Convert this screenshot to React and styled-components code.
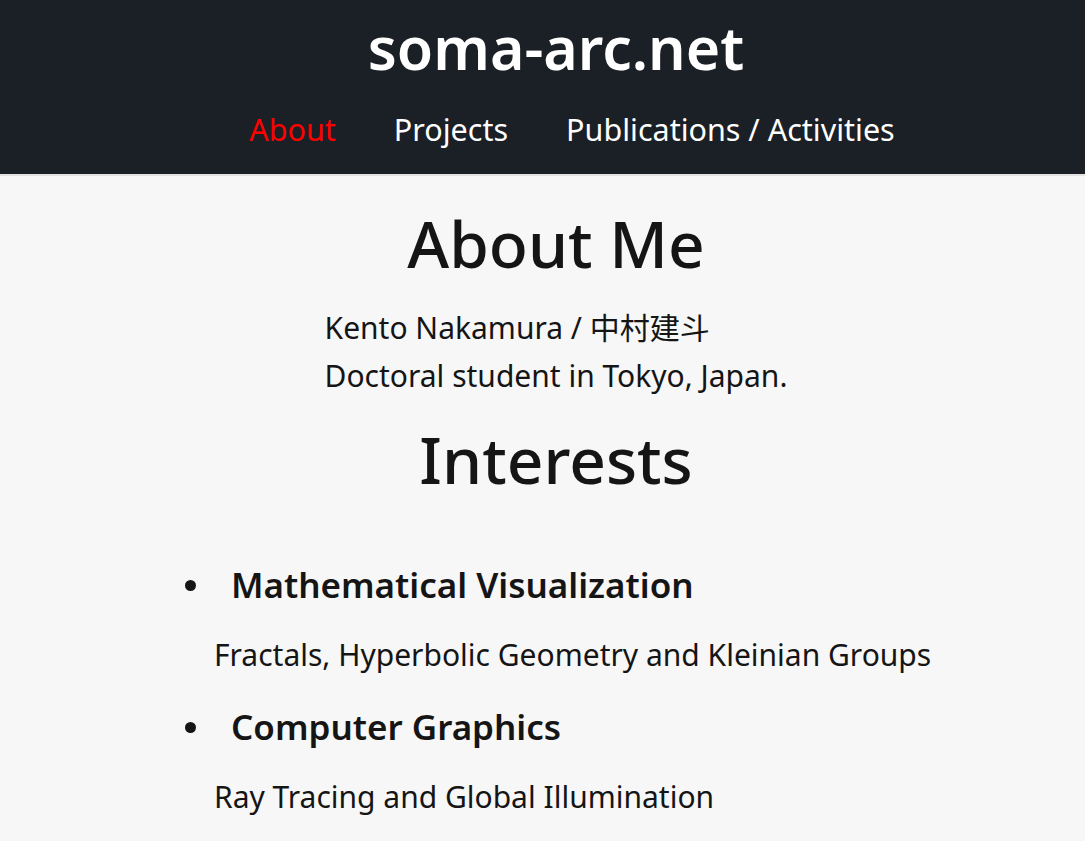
import React from "react";
import styled, { createGlobalStyle } from "styled-components";

const GlobalStyle = createGlobalStyle`
  html, body {
    margin: 0;
    padding: 0;
    background: #f7f7f7;
  }
  body {
    font-family: "Noto Sans", "Noto Sans CJK JP", sans-serif;
    color: #151515;
  }
`;

const Header = styled.header`
  background: #1b2027;
  border-bottom: 2px solid #e2e2e2;
  padding: 14px 0 0 27px;
  height: 160px;
  display: flex;
  flex-direction: column;
  align-items: center;
`;

const SiteTitle = styled.h1`
  margin: 0;
  font-size: 59px;
  line-height: 67px;
  font-weight: 600;
  color: #ffffff;
`;

const Nav = styled.nav`
  display: flex;
  gap: 58px;
  margin-top: 28px;
  padding-left: 32px;
`;

const NavLink = styled.a`
  font-size: 30.5px;
  line-height: 40px;
  color: ${(p) => (p.active ? "#ff0000" : "#ffffff")};
  text-decoration: none;
`;

const Main = styled.main`
  padding-left: 27px;
  display: flex;
  flex-direction: column;
  align-items: center;
`;

const Heading = styled.h2`
  margin: ${(p) => p.gap || "0"};
  font-size: 64px;
  line-height: 80px;
  font-weight: 500;
  color: #151515;
`;

const Intro = styled.div`
  margin-top: 20px;
  font-size: 30px;
  line-height: 48px;
`;

const InterestList = styled.ul`
  list-style: none;
  margin: 61px 0 0;
  padding: 0;
  align-self: flex-start;
  margin-left: 158px;
`;

const Interest = styled.li`
  display: flex;
  flex-direction: column;
  margin-bottom: 24px;
`;

const InterestTitle = styled.h3`
  display: flex;
  align-items: center;
  gap: 35px;
  margin: 0;
  font-size: 35px;
  line-height: 48px;
  font-weight: 600;
  &::before {
    content: "";
    width: 11px;
    height: 11px;
    border-radius: 50%;
    background: #151515;
    flex: none;
  }
`;

const InterestText = styled.p`
  margin: 22px 0 0 29px;
  font-size: 30px;
  line-height: 48px;
`;

const interests = [
  {
    title: "Mathematical Visualization",
    text: "Fractals, Hyperbolic Geometry and Kleinian Groups",
  },
  { title: "Computer Graphics", text: "Ray Tracing and Global Illumination" },
];

const App = () => {
  return (
    <React.Fragment>
      <GlobalStyle />
      <Header>
        <SiteTitle>soma-arc.net</SiteTitle>
        <Nav>
          <NavLink href="#" active>
            About
          </NavLink>
          <NavLink href="#">Projects</NavLink>
          <NavLink href="#">Publications / Activities</NavLink>
        </Nav>
      </Header>
      <Main>
        <Heading gap="28px 0 0">About Me</Heading>
        <Intro>
          Kento Nakamura / 中村建斗
          <br />
          Doctoral student in Tokyo, Japan.
        </Intro>
        <Heading gap="20px 0 0">Interests</Heading>
        <InterestList>
          {interests.map((item) => (
            <Interest key={item.title}>
              <InterestTitle>{item.title}</InterestTitle>
              <InterestText>{item.text}</InterestText>
            </Interest>
          ))}
        </InterestList>
      </Main>
    </React.Fragment>
  );
};

export default App;
